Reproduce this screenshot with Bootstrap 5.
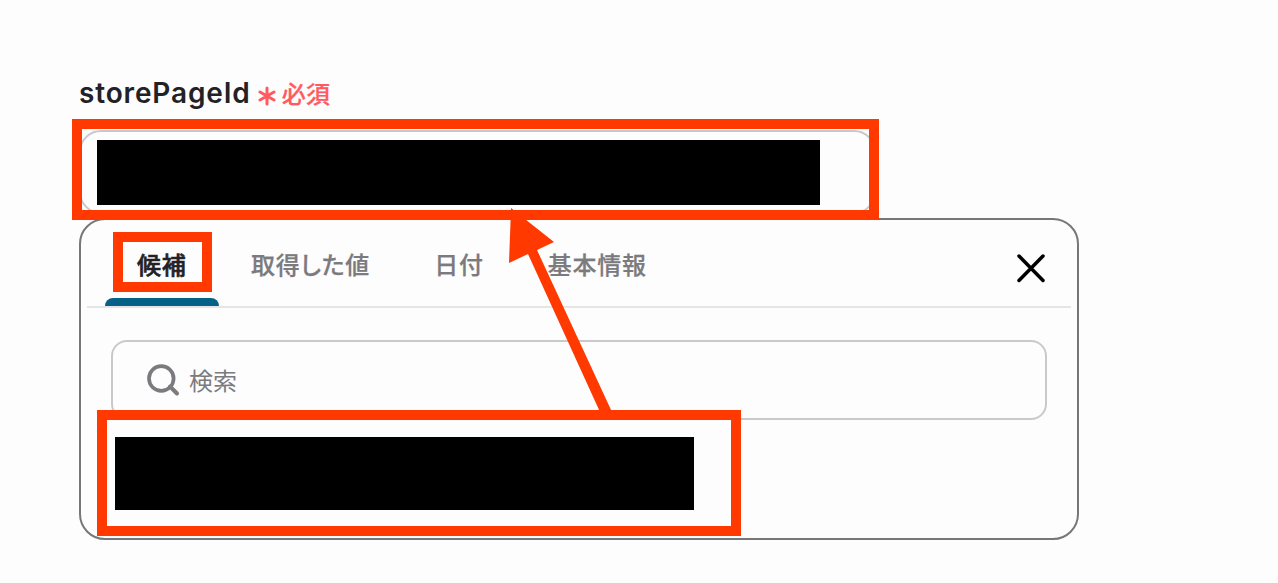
<!DOCTYPE html>
<html lang="ja">
<head>
  <meta charset="UTF-8">
  <meta name="viewport" content="width=device-width, initial-scale=1">
  <title>storePageId</title>
  <link href="https://cdn.jsdelivr.net/npm/bootstrap@5.3.3/dist/css/bootstrap.min.css" rel="stylesheet">
  <style>
    body {
      background-color: #fdfdfd;
      color: #222226;
      font-family: Inter, "Noto Sans CJK JP", sans-serif;
      font-size: 24px;
      letter-spacing: .033em;
      font-feature-settings: "palt";
      overflow: hidden;
    }
    .field {
      width: 1000px;
      margin-left: 79px;
      padding-top: 73px;
    }
    .field-label {
      height: 40px;
      margin-bottom: 17px;
      line-height: 40px;
    }
    .field-name {
      font-size: 28px;
      font-weight: 600;
      letter-spacing: .85px;
    }
    .required-mark {
      margin: 6px 6px 0 7px;
    }
    .required {
      padding-top: 3px;
      color: #ff5a5f;
      font-weight: 500;
      letter-spacing: .02em;
      -webkit-text-stroke: .25px;
    }
    .value-box {
      width: 797px;
      height: 84px;
      margin-bottom: 4px;
      padding: 8px 16px;
      border: 2px solid #c9c7cb;
      border-radius: 22px;
    }
    .picker {
      height: 322px;
      padding: 0 6px;
      border: 2px solid #777679;
      border-radius: 26px;
      background-color: #fdfdfd;
    }
    .tab-bar {
      height: 88px;
      padding-left: 18px;
      padding-right: 24px;
      border-bottom: 2px solid #e5e5e5;
    }
    .tab-bar .nav-link {
      height: 86px;
      padding: 0 32px;
      line-height: 92px;
      color: #7b7a7e;
      font-weight: 500;
      -webkit-text-stroke: .25px;
    }
    .tab-bar .nav-link.active {
      width: 114px;
      color: #222226;
      -webkit-text-stroke: .6px;
    }
    .tab-bar .nav-link.active::after {
      content: "";
      position: absolute;
      left: 0;
      right: 0;
      bottom: 0;
      height: 8px;
      border-radius: 8px 8px 0 0;
      background-color: #056286;
    }
    .search-box {
      height: 80px;
      margin: 32px 24px 17px;
      padding-left: 33px;
      border: 2px solid #c9c9c9;
      border-radius: 16px;
      color: #7b7a7e;
    }
    .search-hint {
      padding-top: 3px;
      letter-spacing: 0;
    }
    .redacted {
      background-color: #000;
    }
    .redacted-value {
      width: 723px;
      height: 65px;
    }
    .redacted-option {
      width: 579px;
      height: 73px;
      margin-left: 28px;
    }
    /* annotations laid over the form */
    .marker {
      position: absolute;
      border: 10px solid #ff3900;
      z-index: 2;
    }
    .marker-value {
      top: -13px;
      left: -9px;
      width: 807px;
      height: 101px;
    }
    .marker-tab {
      top: 12px;
      left: 8px;
      width: 99px;
      height: 60px;
    }
    .marker-option {
      top: -27px;
      left: 10px;
      width: 644px;
      height: 126px;
    }
    .arrow {
      position: absolute;
      top: -12px;
      left: 421px;
      z-index: 3;
    }
  </style>
</head>
<body>
  <main class="field">
    <div class="field-label d-flex align-items-center">
      <span class="field-name">storePageId</span>
      <svg class="required-mark" width="18" height="20" viewBox="0 0 18 20" stroke="#ff5a5f" stroke-width="3" stroke-linecap="round">
        <path d="M9 2v16M2 6l14 8M2 14l14-8"/>
      </svg>
      <span class="required">必須</span>
    </div>

    <div class="value-box position-relative">
      <div class="redacted redacted-value"></div>
      <div class="marker marker-value"></div>
    </div>

    <section class="picker position-relative">
      <div class="tab-bar d-flex justify-content-between align-items-center">
        <nav class="nav flex-nowrap">
          <a class="nav-link active position-relative" href="#">候補<span class="marker marker-tab"></span></a>
          <a class="nav-link" href="#">取得した値</a>
          <a class="nav-link" href="#">日付</a>
          <a class="nav-link" href="#">基本情報</a>
        </nav>
        <button class="btn p-0 pt-2 mt-1 border-0 d-flex" type="button" aria-label="閉じる">
          <svg width="32" height="32" viewBox="0 0 32 32" stroke="#000" stroke-width="3.5" stroke-linecap="round">
            <path d="M4 3l24 24.5M28 3L4 27.5"/>
          </svg>
        </button>
      </div>

      <div class="search-box d-flex align-items-center">
        <svg class="me-2" width="35" height="34" viewBox="0 0 35 34" fill="none" stroke="#7b7a7e" stroke-width="3.7">
          <circle cx="15.3" cy="15.5" r="12.3"/>
          <path d="M24 23.5l7 7" stroke-width="4" stroke-linecap="round"/>
        </svg>
        <span class="search-hint">検索</span>
      </div>

      <div class="position-relative">
        <div class="redacted redacted-option"></div>
        <div class="marker marker-option"></div>
      </div>

      <svg class="arrow" width="120" height="210" viewBox="0 0 120 210" fill="#ff3900">
        <path d="M9 0L52 34 35 42 110 204H98L26 46 7 55Z"/>
      </svg>
    </section>
  </main>

  <script src="https://cdn.jsdelivr.net/npm/bootstrap@5.3.3/dist/js/bootstrap.bundle.min.js"></script>
</body>
</html>
